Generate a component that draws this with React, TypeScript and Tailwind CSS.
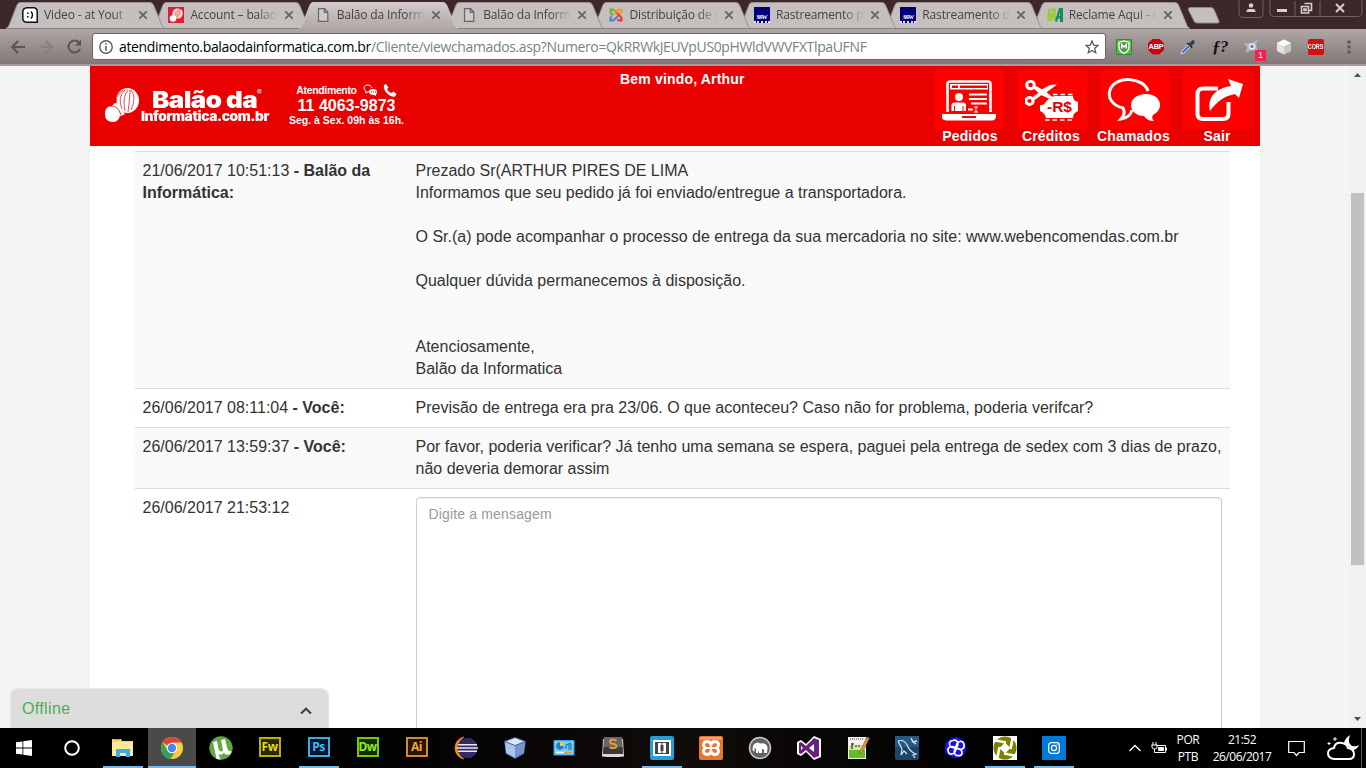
import type { ReactNode } from "react";

const ui = "font-['Open_Sans','Noto_Sans',sans-serif]";

/* ---------- browser chrome ---------- */

function TabShape({ active }: { active?: boolean }) {
  return (
    <svg className="absolute -left-4 top-0" width="160" height="29" viewBox="0 0 160 29">
      <defs>
        <linearGradient id="activeTab" gradientUnits="userSpaceOnUse" x1="0" y1="2" x2="0" y2="29">
          <stop offset="0" stopColor="#d2cccc" />
          <stop offset="1" stopColor="#b0a6a6" />
        </linearGradient>
      </defs>
      <path
        d="M0 29 C2.500 27 3 25.500 4 23 L11 5 Q12 2.500 14 2.500 H144 Q146.500 2.500 147.500 5 L155 23 C156 26 157 27.500 159 29 Z"
        fill={active ? "url(#activeTab)" : "#c6bfbf"}
      />
      <path
        d="M0 28.500 C2.500 27 3 25.500 4 23 L11 5 Q12 2.500 14 2.500 H144 Q146.500 2.500 147.500 5 L155 23 C156 26 157 27.500 159 28.500"
        fill="none"
        stroke={active ? "#cfc8c8" : "#9b9191"}
        strokeWidth="1"
      />
      {!active && <path d="M1 28.500H159" stroke="#8b8080" />}
    </svg>
  );
}

function Tab({ icon, title, active, z }: { icon: ReactNode; title: string; active?: boolean; z: string }) {
  return (
    <div className={`relative flex h-[29px] w-[146.400px] shrink-0 items-center ${z}`}>
      <TabShape active={active} />
      <div className="relative flex h-4 w-4 shrink-0 items-center justify-center">{icon}</div>
      <div
        className={`relative ml-1.5 w-[88px] overflow-hidden whitespace-nowrap text-[12px] tracking-[-0.150px] text-[#4a4040] [mask-image:linear-gradient(to_right,black_68px,transparent_88px)] ${ui}`}
      >
        {title}
      </div>
      <svg className="relative ml-[6px] shrink-0" width="10" height="10" viewBox="0 0 10 10">
        <path d="M1.300 1.300 8.700 8.700M8.700 1.300 1.300 8.700" stroke="#6d6164" strokeWidth="1.800" />
      </svg>
    </div>
  );
}

const PageIcon = () => (
  <svg width="12" height="16" viewBox="0 0 12 16">
    <path d="M1.500 1.700H7.500L10.800 5V14.300H1.500Z M7.300 1.700V5.300H10.800" fill="#cfc9c9" stroke="#666" strokeWidth="1.200" />
  </svg>
);

const SmileIcon = () => (
  <svg width="16" height="16" viewBox="0 0 16 16">
    <path d="M5 .8H12Q15.200 1 15.200 5V15.200H4.500Q.8 15 .8 11V5Q1 1 5 .8Z" fill="#fff" stroke="#111" strokeWidth="1.500" />
    <path d="M5 5.500H6.600V7H5ZM5 9H6.600V10.500H5Z" fill="#111" />
    <path d="M9 4.500Q12 8 9 11.500" fill="none" stroke="#111" strokeWidth="1.400" />
  </svg>
);

const BalloonTabIcon = () => (
  <svg width="16" height="16" viewBox="0 0 16 16">
    <path d="M0 0H16V16H0Z" fill="#e11f2b" />
    <circle cx="9.500" cy="6.500" r="5.300" fill="#f3a3a6" />
    <path d="M6 10Q4 5 9 2M13 3Q15 7 11 11" stroke="#fff" strokeWidth="1.300" fill="none" />
    <circle cx="5" cy="11.500" r="3.300" fill="#fff" />
  </svg>
);

const JoomlaIcon = () => (
  <svg width="16" height="16" viewBox="0 0 16 16" fill="none" strokeWidth="2.300">
    <path d="M1.800 3.500 3.500 1.800M3 3Q5 2 6.500 3.500L10 7M3 3Q2 5.500 3.500 7L5 8.500" stroke="#6fb43f" />
    <path d="M12.500 1.800 14.200 3.500M13 3Q11 2 9.500 3.500L6 7M13 3Q14 5 12.500 6.500" stroke="#f8961f" />
    <path d="M14.200 12.500 12.500 14.200M13 13Q14 11 12.500 9.500L9 6M13 13Q11 14 9.500 12.500" stroke="#ee3b34" />
    <path d="M3.500 14.200 1.800 12.500M3 13Q5 14 6.500 12.500L10 9M3 13Q2 11 3.500 9.500" stroke="#4c86c6" />
  </svg>
);

const SswIcon = () => (
  <div className="flex h-4 w-4 flex-col items-center justify-end border-b-2 border-dotted border-[#e5e5f5] bg-[#00007c] font-['Liberation_Serif',serif] text-[8px] font-bold leading-[8px] tracking-[-0.6px] text-white">
    ssw
  </div>
);

const ReclameIcon = () => (
  <svg width="16" height="16" viewBox="0 0 16 16">
    <path d="M1 2 8 1Q10 3 8.500 7L10 14H7L5.500 9.500 5 14H0Z" fill="#9fc93c" />
    <path d="M3.500 4 6 3.500 5.500 6.500H3Z" fill="#c6bfbf" />
    <path d="M8 14 12 1H16V15H13V11.500H11L10 15Z" fill="#158c5b" />
    <path d="M12 9 13 5V9Z" fill="#c6bfbf" />
  </svg>
);

function TabStrip() {
  return (
    <div className="relative flex h-[29px] w-full shrink-0 justify-between overflow-hidden bg-[#3c272a]">
      <div className="flex pl-[22px]">
        <Tab z="z-[8]" icon={<SmileIcon />} title="Video - at Yout" />
        <Tab z="z-[7]" icon={<BalloonTabIcon />} title="Account – balao" />
        <Tab z="z-10" active icon={<PageIcon />} title="Balão da Inform" />
        <Tab z="z-[6]" icon={<PageIcon />} title="Balão da Inform" />
        <Tab z="z-[5]" icon={<JoomlaIcon />} title="Distribuição de c" />
        <Tab z="z-[4]" icon={<SswIcon />} title="Rastreamento p" />
        <Tab z="z-[3]" icon={<SswIcon />} title="Rastreamento d" />
        <Tab z="z-[2]" icon={<ReclameIcon />} title="Reclame Aqui - C" />
        <svg className="-ml-[6px] mt-[7px]" width="34" height="17" viewBox="0 0 34 17">
          <path d="M3 .5H24Q26 .5 27 2.500L32 14Q32.500 16 31 16H10Q8 16 7 14L1.500 3Q1 .5 3 .5Z" fill="#c6bfbf" stroke="#91868a" />
        </svg>
      </div>
      <svg width="130" height="20" viewBox="0 0 130 20">
        <path d="M3.500 0V14Q3.500 17.500 7 17.500H24Q27.500 17.500 27.500 14V0M34.500 0V13Q34.500 16.500 38 16.500H122Q126.500 16.500 126.500 13V0M59.500 1V16M84.500 1V16" transform="translate(-.5 0)" fill="none" stroke="#755f63" />
        <circle cx="15" cy="5.500" r="2.200" fill="#d5cdce" />
        <path d="M10.500 12V11Q10.500 9 13 9H17Q19.500 9 19.500 11V12Z" fill="#d5cdce" />
        <path d="M41 10.500H51" stroke="#d5cdce" strokeWidth="3" />
        <path d="M68.500 3.500H75.500V10.500H73M65.500 6.500H72.500V13H65.500ZM68 9H70V10.500H68Z" fill="none" stroke="#d5cdce" strokeWidth="1.600" />
        <path d="M100 4 108 12M108 4 100 12" stroke="#d5cdce" strokeWidth="2" />
      </svg>
    </div>
  );
}

function Toolbar() {
  return (
    <div className="flex h-[37px] w-full shrink-0 items-center border-b-2 border-b-[#a79b9b] bg-linear-to-b from-[#b0a6a6] to-[#837777] pl-[10px]">
      <svg width="76" height="20" viewBox="0 0 76 20" fill="none" strokeWidth="2">
        <path d="M15 10H2.500M8 4 2 10 8 16" stroke="#5c5354" />
        <path d="M29 10H42M36 4 42 10 36 16" stroke="#8a7f7f" />
        <path d="M69 5.500A6 6 0 1 0 70 12" stroke="#5c5354" />
        <path d="M71 2.500V8.500H65Z" fill="#5c5354" />
      </svg>
      <div className="ml-[6px] flex h-[27px] w-[1014px] items-center rounded-[3px] border border-[#6f6266] bg-white pl-[6px] pr-1.5">
        <svg width="14" height="14" viewBox="0 0 14 14" className="shrink-0">
          <circle cx="7" cy="7" r="6.200" fill="none" stroke="#5a5a5a" strokeWidth="1.400" />
          <path d="M7 3.200V4.800M7 6V10.800" stroke="#5a5a5a" strokeWidth="1.600" />
        </svg>
        <div className={`ml-[6px] flex-1 whitespace-nowrap text-[14px] text-[#808080] ${ui}`}>
          <span className="tracking-[-0.345px] text-black">atendimento.balaodainformatica.com.br</span>
          <span className="tracking-[-0.360px]">/Cliente/viewchamados.asp?Numero=QkRRWkJEUVpUS0pHWldVWVFXTlpaUFNF</span>
        </div>
        <svg width="14" height="14" viewBox="0 0 14 14">
          <path d="M7 1 8.700 5.100 13 5.500 9.700 8.300 10.700 12.700 7 10.400 3.300 12.700 4.300 8.300 1 5.500 5.300 5.100Z" fill="none" stroke="#5a5a5a" strokeWidth="1.300" />
        </svg>
      </div>
      <div className="flex flex-1 items-center pl-[10px]">
        <svg width="16" height="16" viewBox="0 0 16 16">
          <path d="M.5.5H15.500V15.500H.5Z" fill="#58b848" stroke="#2d8c2b" />
          <path d="M8 2 13 3.500V8Q13 12 8 14.500 3 12 3 8V3.500Z" fill="#5a9a52" stroke="#fff" strokeWidth="1.300" />
          <path d="M5.700 9.500V5.500L8 8 10.300 5.500V9.500" fill="none" stroke="#fff" strokeWidth="1.400" />
        </svg>
        <div className="ml-4 flex h-4 w-4 items-center justify-center bg-[#cf000d] font-['Liberation_Sans',sans-serif] text-[7.500px] font-bold leading-none tracking-[-0.3px] text-white [clip-path:polygon(30%_0,70%_0,100%_30%,100%_70%,70%_100%,30%_100%,0_70%,0_30%)]">
          ABP
        </div>
        <svg width="16" height="16" viewBox="0 0 16 16" className="ml-4">
          <path d="M1 15 2 12 8 6 10 8 4 14Z" fill="#3f70d8" stroke="#d7dbe8" />
          <path d="M8 4.500 11.500 8" stroke="#273238" strokeWidth="2" strokeLinecap="round" />
          <path d="M10.500 5.500 13 3" stroke="#34424a" strokeWidth="3.600" strokeLinecap="round" />
        </svg>
        <div className="ml-4 w-4 whitespace-nowrap font-['Liberation_Serif',serif] text-[17px] font-bold italic leading-4 tracking-[-0.5px] text-[#151515]">ƒ?</div>
        <div className="relative ml-4 h-4 w-4">
          <svg width="16" height="16" viewBox="0 0 16 16">
            <path d="M8 4 14 0 12 6 14 13 8 11 1 14 3 9 0 4Z" fill="#b0b3c2" />
            <circle cx="8" cy="7.500" r="2.500" fill="#777d92" stroke="#eef" strokeWidth="1.500" />
          </svg>
          <div className="absolute left-[11px] top-[11px] flex h-[11px] w-[11px] items-center justify-center bg-[#f5204b] font-['Liberation_Sans',sans-serif] text-[9px] leading-none text-white">
            1
          </div>
        </div>
        <svg width="16" height="16" viewBox="0 0 16 16" className="ml-4">
          <path d="M8 .5 15 4V12L8 15.500 1 12V4Z" fill="#e2e2e2" />
          <path d="M8 .5 15 4 8 7.500 1 4Z" fill="#fafafa" />
          <path d="M8 7.500 15 4V12L8 15.500Z" fill="#c6c6c6" />
        </svg>
        <div className="ml-4 flex h-4 w-4 items-center justify-center rounded-[2px] bg-[#d40f12] font-['Liberation_Sans',sans-serif] text-white">
          <span className="inline-block origin-center scale-x-[0.680] text-[8px] font-bold leading-none">CORS</span>
        </div>
        <svg width="4" height="14" viewBox="0 0 4 14" className="ml-[23px]">
          <path d="M.5.5H3.500V3.500H.5ZM.5 5.500H3.500V8.500H.5ZM.5 10.500H3.500V13.500H.5Z" fill="#5f5556" />
        </svg>
      </div>
    </div>
  );
}

/* ---------- site header ---------- */

const BalloonLogo = () => (
  <svg width="36" height="38" viewBox="0 0 36 38">
    <ellipse cx="22.500" cy="14.500" rx="11.500" ry="12.500" fill="#fff" />
    <path d="M13 21Q8 11 18 4M17 23Q12 11 20 4M20 25Q17 11 23 4M23 26Q25 11 25 4M26 24Q32 11 26 4" fill="none" stroke="#e90000" strokeWidth=".7" />
    <path d="M0 28Q0 20 7 20Q11 14 14 20L20 28Q16 30 15 30Q13 36 8 36Q0 36 0 28Z" fill="#fff" />
    <path d="M5 20Q13 19 16 29" fill="none" stroke="#e90000" strokeWidth=".8" />
  </svg>
);

const PedidosIcon = () => (
  <svg width="54" height="42" viewBox="0 0 54 42" fill="#fff">
    <path d="M5.500 33V5Q5.500 2.500 8 2.500H46Q48.500 2.500 48.500 5V33" fill="none" stroke="#fff" strokeWidth="2.600" />
    <path d="M8 5H46V10.500H8Z" />
    <path d="M10 6.500H16V9H10ZM18 6.500H45V9H18Z" fill="red" />
    <circle cx="17" cy="18" r="4" />
    <path d="M9.500 32V26Q9.500 23.500 13 23.500H21Q24 23.500 24 26V32Z" />
    <path d="M12.500 27V32M21 27V32" stroke="red" />
    <path d="M27 15.500H45M27 20H45M29 24.500H45M26 30.500H31" stroke="#fff" strokeWidth="2.200" />
    <path d="M32 28H36M34 28V33M32 33H36" stroke="#fff" />
    <path d="M0 35H54V38Q53 41.500 50 41.500H4Q0 41 0 38Z" />
    <path d="M20 37H34V39H20Z" fill="red" />
  </svg>
);

const CreditosIcon = () => (
  <svg width="54" height="42" viewBox="0 0 54 42" className="-ml-px">
    <g fill="none" stroke="#fff">
      <circle cx="5.500" cy="6" r="3.800" strokeWidth="3" />
      <circle cx="4.500" cy="22" r="3.600" strokeWidth="3" />
      <path d="M8 20 19 12" strokeWidth="3.500" />
    </g>
    <path d="M14 12 24 6.500Q28 5 32 5.500L18 16Z" fill="#fff" />
    <path d="M8 9 11 7 20 12 31 21 27 21 16 16Z" fill="#fff" />
    <path d="M20 24Q24 18 30 17H48Q48 22 53 23V32Q48 34 48 39H21Q20 34 15 32V26Q19 26 20 24Z" fill="#fff" />
    <path d="M28 15.500H49M20 41H49" stroke="#fff" strokeWidth="1.300" strokeDasharray="4.500 3" />
    <text x="22" y="33" fill="#e00000" fontFamily="Liberation Sans" fontSize="14" fontWeight="700" textLength="25" lengthAdjust="spacingAndGlyphs">-R$</text>
  </svg>
);

const ChamadosIcon = () => (
  <svg width="54" height="44" viewBox="0 0 54 44" className="-ml-[2px]">
    <path d="M41 13C37-1 8-3 3 12C0 21 7 28 16 30Q19 36 14 41Q23 40 25 32" fill="none" stroke="#fff" strokeWidth="3" />
    <path d="M39 16C48 16 53 21 53 27Q53 33 46 37Q44 40 47 43Q40 43 37 38C29 38 24 33 24 27C24 21 30 16 39 16Z" fill="#fff" />
  </svg>
);

const SairIcon = () => (
  <svg width="48" height="42" viewBox="0 0 48 42" className="ml-px">
    <path d="M23 9.500H8Q2.500 9.500 2.500 15V35Q2.500 40 8 40H28Q33.500 40 33.500 35V23" fill="none" stroke="#fff" strokeWidth="4" />
    <path d="M15 32C12 17 22 9 36 7L33 0 48 5 44 19 40 15C30 17 22 22 15 32Z" fill="#fff" />
  </svg>
);

function MenuItem({ label, icon, nudge }: { label: string; icon: ReactNode; nudge: string }) {
  return (
    <div className="flex h-full w-[70px] shrink-0 flex-col items-center pt-1">
      <div className="flex h-[59px] w-full items-center justify-center bg-[red]">{icon}</div>
      <div className={`whitespace-nowrap text-[14px] font-bold leading-[14px] tracking-[0.150px] ${nudge}`}>{label}</div>
    </div>
  );
}

function SiteHeader() {
  return (
    <div className="flex h-20 w-full shrink-0 bg-[#e90000] text-white">
      <div className="flex w-[195px] shrink-0 pl-[15px] pt-[20px]">
        <BalloonLogo />
        <div className="flex flex-col font-['Inter','Liberation_Sans',sans-serif] font-black">
          <div className="flex h-[24.500px] pl-[11px] pt-[3px]">
            <span className="inline-block w-[105px] origin-left scale-x-[1.130] whitespace-nowrap text-[23px] leading-[22px] tracking-[-0.5px]">Balão da</span>
            <span className="text-[7px] font-normal leading-[8px]">®</span>
          </div>
          <div className="origin-left scale-x-[1.060] whitespace-nowrap text-[13px] leading-[10px] tracking-[-0.4px]">Informática.com.br</div>
        </div>
      </div>
      <div className="flex w-[123px] shrink-0 flex-col items-center pt-[17px] font-bold">
        <div className="flex h-[14px] items-center text-[10.500px] leading-[14px]">
          <span className="tracking-[-0.350px]">Atendimento</span>
          <svg width="14" height="12" viewBox="0 0 14 12" className="ml-1.5">
            <path d="M9 4C8 0 1 0 1 4Q1 6 3 7L2.500 9 6 7.500" fill="none" stroke="#fff" />
            <path d="M6 8Q6 5 10 5T14 8Q14 10 13 10.500V12L11 11Q6 11 6 8Z" fill="#fff" />
            <path d="M8 8H9M10 8H11M12 8H13" stroke="#e90000" />
          </svg>
          <svg width="14" height="13" viewBox="0 0 14 13" className="ml-1.5">
            <path d="M1 1 3 0 5.500 3.500 4 5.500Q5.500 8 8.500 9L10.500 7.500 13.500 10 12 12.500Q8 13.500 4 9.500T1 1Z" fill="#fff" />
          </svg>
        </div>
        <div className="pt-px text-[16px] leading-4">11 4063-9873</div>
        <div className="-mt-px whitespace-nowrap text-[10.500px] leading-[14px]">Seg. à Sex. 09h às 16h.</div>
      </div>
      <div className="flex-1 pl-[212px] pt-[5px] text-[14px] font-bold leading-4 tracking-[0.180px]">Bem vindo, Arthur</div>
      <div className="flex shrink-0 gap-[13px] pr-[7px]">
        <MenuItem nudge="ml-[2px]" label="Pedidos" icon={<PedidosIcon />} />
        <MenuItem nudge="-ml-[2px]" label="Créditos" icon={<CreditosIcon />} />
        <MenuItem nudge="-ml-[3px]" label="Chamados" icon={<ChamadosIcon />} />
        <MenuItem nudge="-ml-[2px]" label="Sair" icon={<SairIcon />} />
      </div>
    </div>
  );
}

/* ---------- ticket conversation ---------- */

function Row({ when, who, striped, children }: { when: string; who?: string; striped?: boolean; children: ReactNode }) {
  return (
    <div className={`flex border-t border-[#ddd] py-2 ${striped ? "bg-[#f9f9f9]" : "bg-white"}`}>
      <div className="w-[273px] shrink-0 pl-[7.500px] pr-2">
        {when}
        {who && <b> - {who}</b>}
      </div>
      <div className="flex-1 pl-[7.500px] pr-2">{children}</div>
    </div>
  );
}

function Conversation() {
  return (
    <div className="ml-[45px] mt-[5px] w-[1095px] text-[16px] leading-[22px] text-[#333]">
      <Row when="21/06/2017 10:51:13" who="Balão da Informática:" striped>
        <p>Prezado Sr(ARTHUR PIRES DE LIMA</p>
        <p>Informamos que seu pedido já foi enviado/entregue a transportadora.</p>
        <p className="mt-[22px]">O Sr.(a) pode acompanhar o processo de entrega da sua mercadoria no site: www.webencomendas.com.br</p>
        <p className="mt-[22px]">Qualquer dúvida permanecemos à disposição.</p>
        <p className="mt-11">Atenciosamente,</p>
        <p>Balão da Informatica</p>
      </Row>
      <Row when="26/06/2017 08:11:04" who="Você:">
        Previsão de entrega era pra 23/06. O que aconteceu? Caso não for problema, poderia verifcar?
      </Row>
      <Row when="26/06/2017 13:59:37" who="Você:" striped>
        <p className="whitespace-nowrap">Por favor, poderia verificar? Já tenho uma semana se espera, paguei pela entrega de sedex com 3 dias de prazo,</p>
        <p>não deveria demorar assim</p>
      </Row>
      <Row when="26/06/2017 21:53:12">
        <textarea
          placeholder="Digite a mensagem"
          className="block h-[300px] w-full resize-none rounded border border-[#ccc] bg-white px-3 py-1.5 text-[14px] leading-5 tracking-[0.160px] shadow-[inset_0_1px_1px_rgba(0,0,0,0.075)] placeholder:text-[#999]"
        />
      </Row>
    </div>
  );
}

function Scrollbar() {
  return (
    <div className="flex w-[17px] shrink-0 flex-col items-center bg-[#f1f1f1]">
      <svg width="17" height="17" viewBox="0 0 17 17">
        <path d="M5 11 8.500 7 12 11Z" fill="#505050" />
      </svg>
      <div className="mt-[110px] h-[372px] w-[13px] bg-[#c1c1c1]" />
      <svg className="mt-auto" width="17" height="17" viewBox="0 0 17 17">
        <path d="M5 6 8.500 10 12 6Z" fill="#505050" />
      </svg>
    </div>
  );
}

/* ---------- taskbar ---------- */

function Slot({ children, open, active }: { children: ReactNode; open?: boolean; active?: boolean }) {
  return (
    <div className="flex h-10 w-[49px] shrink-0 flex-col items-center">
      <div className={`flex h-[38px] w-[48px] items-center justify-center pt-[2px] ${active ? "bg-[#4c4a48]" : ""}`}>{children}</div>
      {open && <div className={`h-[2px] bg-[#76b9ed] ${active ? "w-[48px]" : "w-10"}`} />}
    </div>
  );
}

function AdobeIcon({ label, tone }: { label: string; tone: string }) {
  return (
    <div className={`mb-[3px] flex h-5 w-[22px] items-center justify-center border-2 text-[12px] font-bold leading-none tracking-[-0.5px] font-['Open_Sans',sans-serif] ${tone}`}>
      {label}
    </div>
  );
}

const S = ({ children }: { children: ReactNode }) => (
  <svg width="24" height="24" viewBox="0 0 24 24">{children}</svg>
);

function Taskbar() {
  return (
    <div className="flex h-10 w-full shrink-0 bg-linear-to-r from-black via-[#100c0a] to-black">
      <div className="flex w-[48px] shrink-0 items-center justify-center">
        <svg width="16" height="16" viewBox="0 0 16 16" fill="#fff">
          <path d="M0 2.300 6.500 1.400V7.600H0ZM7.300 1.300 16 0V7.600H7.300ZM0 8.400H6.500V14.600L0 13.700ZM7.300 8.400H16V16L7.300 14.700Z" />
        </svg>
      </div>
      <div className="flex w-[50px] shrink-0 items-center justify-center pr-[2px]">
        <svg width="16" height="16" viewBox="0 0 16 16">
          <circle cx="8" cy="8" r="6.800" fill="none" stroke="#fff" strokeWidth="2" />
        </svg>
      </div>
      <Slot open>
        <S>
          <path d="M1 3H10L11 5H22V20H1Z" fill="#f8d775" />
          <path d="M3 3.500H9" stroke="#e99a20" />
          <path d="M1 6H22V20H1Z" fill="#ffe79b" />
          <path d="M5 21V13H19V21H15V17H9V21Z" fill="#39ade3" />
        </S>
      </Slot>
      <Slot open active>
        <S>
          <circle cx="12" cy="12" r="11" fill="#fccb3f" />
          <path d="M12 12 2.500 6.500A11 11 0 0 1 21.500 6.500H12Z" fill="#d9473a" />
          <path d="M2.500 6.500A11 11 0 0 0 10.500 22.900L15 16 7.500 14Z" fill="#33a15b" />
          <circle cx="12" cy="12" r="5.300" fill="#fff" />
          <circle cx="12" cy="12" r="4.200" fill="#4587f1" />
        </S>
      </Slot>
      <Slot>
        <S>
          <circle cx="12" cy="12" r="11.700" fill="#63a744" />
          <path d="M4 6 8 5 9.500 13Q10.500 16.500 14 15L12 4 16 3 18.500 13Q19.500 16 22.500 15L21.500 18Q16 20 15 16.500Q12.500 20 9.500 18L11.500 23.500 7.500 23Z" fill="#fff" />
        </S>
      </Slot>
      <Slot><AdobeIcon label="Fw" tone="border-[#bbb000] bg-[#292600] text-[#e6da15]" /></Slot>
      <Slot open><AdobeIcon label="Ps" tone="border-[#35afe3] bg-[#07142b] text-[#44bbeb]" /></Slot>
      <Slot><AdobeIcon label="Dw" tone="border-[#79c900] bg-[#132a05] text-[#92ee13]" /></Slot>
      <Slot><AdobeIcon label="Ai" tone="border-[#d78b26] bg-[#261504] text-[#f4a33b]" /></Slot>
      <Slot>
        <S>
          <path d="M10 1A11.200 11.200 0 0 0 10 23A13 13 0 0 1 10 1Z" fill="#f7941e" stroke="#f7941e" strokeWidth=".6" />
          <circle cx="13.500" cy="12" r="10.300" fill="#322965" />
          <path d="M4 8.800H23M3 12H24M4 15.200H23" stroke="#e9e7f3" strokeWidth="1.500" />
        </S>
      </Slot>
      <Slot>
        <S>
          <path d="M12 1 23 5 21 18 12 23 3 18 1 5Z" fill="#3e5c99" />
          <path d="M12 2 21 5.500 12 9 3 5.500Z" fill="#dcebea" />
          <path d="M2 6 12 10V22L3 17Z" fill="#a9c6ec" />
          <path d="M22 6 12 10V22L21 17Z" fill="#7496cc" />
        </S>
      </Slot>
      <Slot>
        <S>
          <path d="M2 4.500H22V19H2Z" fill="#7bccf4" stroke="#31a3dd" />
          <circle cx="8" cy="10" r="3.800" fill="#237db8" />
          <path d="M8 10V6A4 4 0 0 1 12 10Z" fill="#ffc044" />
          <path d="M14 13V9L19 7M16 9H20M16 11H20M16 13H20" stroke="#185e94" fill="none" />
          <path d="M4 16.500H12" stroke="#fff" strokeWidth="1.500" /><path d="M12 16.500H19" stroke="#e8992e" />
        </S>
      </Slot>
      <Slot>
        <S>
          <path d="M2 3H22L23 20.500Q12 21.500 1 20.500Z" fill="#d9d9d9" />
          <path d="M3 1H21L22 18H2Z" fill="#666" />
          <path d="M2.500 11H21.500L22 18H2Z" fill="#393939" />
          <path d="M15.500 4.500Q9 2.500 9 5.500Q9 7.500 12.500 8T15.500 10.500Q15 13 8.500 11.500" fill="none" stroke="#f49a36" strokeWidth="1.800" />
        </S>
      </Slot>
      <Slot open>
        <S>
          <rect width="24" height="24" rx="2" fill="#249fd8" />
          <path d="M3 4H21V20H3Z" fill="#fff" />
          <path d="M5 6H19V18H5Z" fill="#454545" />
          <path d="M11.500 7V9H10.500V15H11.500V17H8V7ZM12.500 7V9H13.500V15H12.500V17H16V7Z" fill="#fff" />
        </S>
      </Slot>
      <Slot>
        <S>
          <rect width="24" height="24" rx="2" fill="#e9752c" />
          <path d="M1 1H23V3.500H1Z" fill="#f2a37a" />
          <path d="M12 8.500Q11 5.500 8 5.500T4.500 8.500Q4.500 11 6.500 12Q4.500 13 4.500 15.500T8 18.500Q11 18.500 12 15.500Q13 18.500 16 18.500T19.500 15.500Q19.500 13 17.500 12Q19.500 11 19.500 8.500T16 5.500Q13 5.500 12 8.500Z" fill="none" stroke="#fff" strokeWidth="3" />
          <path d="M8.500 12H15.500" stroke="#fff" strokeWidth="2" />
        </S>
      </Slot>
      <Slot>
        <S>
          <circle cx="12" cy="12" r="10.500" fill="#626262" stroke="#c9c9c9" strokeWidth="1.500" />
          <path d="M4.500 14Q4.500 8 8 7Q10 6 12 7.500Q18 6 19.500 11L19 17H16V13.500L14 13V17H11V14L10 17H8V12.500L6.500 12 6.500 16Z" fill="#fff" />
        </S>
      </Slot>
      <Slot>
        <S>
          <path d="M17 0 24 3V21L17 24 9 16 4 20 0 18V6L4 4 9 8Z" fill="#fff" />
          <path d="M17 2 22 4V20L17 22 9 14 4 18 2 17V7L4 6 9 10ZM17 8 12 12 17 16ZM4 10V14L6 12Z" fill="#68217a" fillRule="evenodd" />
        </S>
      </Slot>
      <Slot>
        <S>
          <path d="M2 1H20V23H2Z" fill="#f3f3ed" />
          <path d="M3 13H19V22H3Z" fill="#62bd27" />
          <path d="M3 9H19V14H3Z" fill="#c9eaa9" />
          <path d="M4 3H18" stroke="#a08c99" strokeDasharray="1 1" strokeWidth="2" />
          <path d="M6 7V13M6 8H8M9 10H11M12 10H14" stroke="#222" strokeWidth="1.200" />
          <path d="M14 15 21 1 23.500 2 17 15 14 18Z" fill="#e39a2f" stroke="#795020" strokeWidth=".6" />
        </S>
      </Slot>
      <Slot>
        <S>
          <rect width="24" height="24" rx="2" fill="#1d4568" />
          <path d="M0 0H24V11H0Z" fill="#285b82" />
          <path d="M3 5Q9 3 12 9Q15 16 21 18L18 19 20 22M3 5 7 13 6 19 9 15 12 18" fill="none" stroke="#d7e8f1" strokeWidth="1.200" />
          <path d="M16 2 18 6 22 5M18 6 21 8" fill="none" stroke="#d7e8f1" strokeWidth="1.400" />
        </S>
      </Slot>
      <Slot>
        <S>
          <path d="M8 2Q14-1 18 4 23 6 22 12 22 19 16 21 10 24 6 20 0 18 1 12 0 5 8 2Z" fill="#1613dc" />
          <g fill="none" stroke="#fff" strokeWidth="1.700">
            <path d="M12 12Q6 12 5.500 8.500T9 4.500Q12 3.500 13.500 6T12 12Q12 6 16 5.500T20 9.500Q20.500 12 18 13T12 12Q18 13 18 16.500T14.500 19.500Q11.500 20 10.500 17.500T12 12Q11.500 17.500 8 18T4 14.500Q3.500 12 6 11T12 12" />
          </g>
          <circle cx="12" cy="12" r="1.500" fill="#fff" />
        </S>
      </Slot>
      <Slot open>
        <S>
          <path d="M0 0H24V24H0Z" fill="#fff" />
          <circle cx="12" cy="12" r="11.500" fill="#808000" />
          <path d="M12 6.500 17.500 12 12 17.500 6.500 12Z" fill="#fff" />
          <path d="M13 6.500 0 4M17.500 13 20 0M11 17.500 24 20M6.500 11 4 24" stroke="#fff" strokeWidth="2.600" />
        </S>
      </Slot>
      <Slot open>
        <S>
          <path d="M0 0H24V24H0Z" fill="#0078d7" />
          <rect x="6.700" y="6.700" width="10.600" height="10.600" rx="2.500" fill="none" stroke="#fff" strokeWidth="1.200" />
          <circle cx="12" cy="12" r="2.600" fill="none" stroke="#fff" strokeWidth="1.200" />
          <path d="M14.700 8.700H15.700" stroke="#fff" />
        </S>
      </Slot>
      <div className={`ml-auto flex items-center text-[12px] leading-[17px] text-white ${ui}`}>
        <svg width="38" height="16" viewBox="0 0 38 16" fill="none" stroke="#fff">
          <path d="M.5 11 6 5.500 11.500 11" strokeWidth="1.300" />
          <path d="M27.500 5.500H36.500V12.500H27M37.500 7.500V10.500M24 2V5M27 2V5M22.500 5H28.500M23 5V7Q23 9 25.500 9T28 7V5M25.500 9V12.500H28" />
          <path d="M29.500 7.500H34.500V10.500H29.500Z" fill="#fff" />
        </svg>
        <div className="ml-[9px] w-6 text-center tracking-[-0.4px]">POR<br />PTB</div>
        <div className="ml-[12px] w-[60px] whitespace-nowrap text-center tracking-[-0.5px]">21:52<br />26/06/2017</div>
        <svg className="ml-[16px]" width="17" height="17" viewBox="0 0 17 17">
          <path d="M.7 1.500H16.300V12.500H11L8.500 15.500 6 12.500H.7Z" fill="none" stroke="#fff" strokeWidth="1.200" />
        </svg>
        <svg className="ml-[22px]" width="33" height="26" viewBox="0 0 33 26">
          <path d="M7 24Q1 23 1 18.500T7 13Q8 7 15 8Q20 9 21 13Q27 14 27 19Q27 24 22 24Z" fill="none" stroke="#fff" strokeWidth="2" />
          <path d="M23 0Q20 8 25 11Q29 12 32 10Q30 15 25 15Q22 12 17 8Q18 3 23 0Z" fill="#fff" />
          <path d="M8 2V6M6 4H10M2 7V10M.5 8.500H3.500" stroke="#fff" />
        </svg>
        <div className="ml-[1px] h-10 w-px bg-[#555]" />
        <div className="w-[4px]" />
      </div>
    </div>
  );
}

export default function App() {
  return (
    <div className="relative flex h-[768px] w-[1366px] flex-col overflow-hidden font-['Liberation_Sans',Arial,sans-serif]">
      <TabStrip />
      <Toolbar />
      <div className="flex h-[662px] shrink-0 overflow-hidden bg-[#f4f4f4]">
        <div className="flex-1 pl-[90px]">
          <div className="h-full w-[1170px] overflow-hidden bg-white">
            <SiteHeader />
            <Conversation />
          </div>
        </div>
        <Scrollbar />
      </div>
      <div className="absolute left-[10px] top-[688px] flex h-10 w-[319px] items-center justify-between rounded-t-lg border border-b-0 border-[#e6e6e6] bg-[#ddd] pl-[11px] pr-4 text-[16px] text-[#4caf50]">
        <span className="tracking-[0.350px]">Offline</span>
        <svg width="12" height="8" viewBox="0 0 12 8" className="mt-1">
          <path d="M1 6.500 6 1.800 11 6.500" fill="none" stroke="#444" strokeWidth="2.200" />
        </svg>
      </div>
      <Taskbar />
    </div>
  );
}
